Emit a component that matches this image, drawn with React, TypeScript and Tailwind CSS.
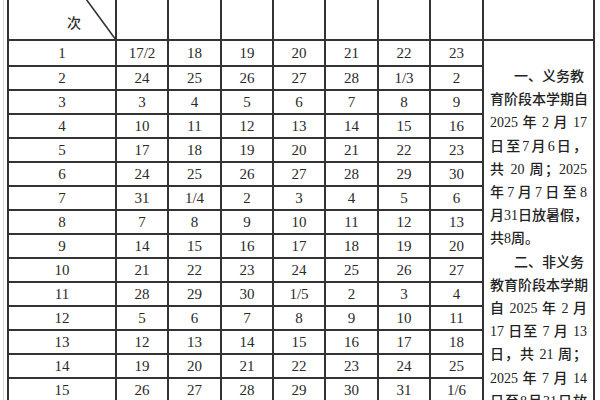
import React from "react";

const rows: string[][] = [
  ["17/2", "18", "19", "20", "21", "22", "23"],
  ["24", "25", "26", "27", "28", "1/3", "2"],
  ["3", "4", "5", "6", "7", "8", "9"],
  ["10", "11", "12", "13", "14", "15", "16"],
  ["17", "18", "19", "20", "21", "22", "23"],
  ["24", "25", "26", "27", "28", "29", "30"],
  ["31", "1/4", "2", "3", "4", "5", "6"],
  ["7", "8", "9", "10", "11", "12", "13"],
  ["14", "15", "16", "17", "18", "19", "20"],
  ["21", "22", "23", "24", "25", "26", "27"],
  ["28", "29", "30", "1/5", "2", "3", "4"],
  ["5", "6", "7", "8", "9", "10", "11"],
  ["12", "13", "14", "15", "16", "17", "18"],
  ["19", "20", "21", "22", "23", "24", "25"],
  ["26", "27", "28", "29", "30", "31", "1/6"],
  ["2", "3", "4", "5", "6", "7", "8"],
  ["9", "10", "11", "12", "13", "14", "15"],
];

const noteLines: { t: string; just: boolean; indent?: boolean }[] = [
  { t: "一、义务教", just: false, indent: true },
  { t: "育阶段本学期自", just: true },
  { t: "2025 年 2 月 17", just: true },
  { t: "日至7月6日，", just: true },
  { t: "共 20 周；2025", just: true },
  { t: "年7月7日至8", just: true },
  { t: "月31日放暑假，", just: true },
  { t: "共8周。", just: false },
  { t: "二、非义务", just: false, indent: true },
  { t: "教育阶段本学期", just: true },
  { t: "自 2025 年 2 月", just: true },
  { t: "17 日至 7 月 13", just: true },
  { t: "日，共 21 周；", just: true },
  { t: "2025 年 7 月 14", just: true },
  { t: "日至8月31日放", just: true },
  { t: "暑假，共7周。", just: false },
];

export default function App() {
  return (
    <div className="w-[600px] h-[400px] overflow-hidden bg-white flex">
      <div className="w-[3px] shrink-0" />
      <div className="w-[4px] shrink-0 border-l border-[#d6d6d6]" />
      <div
        className="grid bg-[#333] pl-[2px] pr-[2px] gap-[2px] grid-cols-[106px_50px_51px_50px_50px_51px_50px_51px_109px] grid-rows-[39px_24px_repeat(20,22px)] self-start"
        style={{ fontFamily: '"Liberation Serif", "Noto Sans CJK SC", serif' }}
      >
        {/* header */}
        <div className="relative bg-white col-start-1 row-start-1">
          <svg className="absolute inset-0" width="106" height="39" viewBox="0 0 106 39">
            <line x1="77" y1="-1" x2="107" y2="40" stroke="#333" strokeWidth="1.6" />
          </svg>
          <div
            className="pl-[58px] pt-[14px] text-[14px] leading-[16px] text-[#333] font-medium"
            style={{ fontFamily: '"Noto Sans CJK SC", sans-serif' }}
          >
            次
          </div>
        </div>
        {[2, 3, 4, 5, 6, 7, 8, 9].map((c) => (
          <div key={c} className="bg-white row-start-1" />
        ))}

        {/* note column */}
        <div
          className="bg-white col-start-9 row-start-2 row-span-21 px-[6px] pt-[24px] text-[14px] leading-[23.2px] text-[#222] font-medium"
          style={{ fontFamily: '"Liberation Serif", "Noto Sans CJK SC", serif' }}
        >
          {noteLines.map((l, i) => (
            <div
              key={i}
              className={`${l.just ? "text-justify [text-align-last:justify]" : "text-left"} ${l.indent ? "pl-[24px]" : ""} whitespace-nowrap`}
            >
              {l.t}
            </div>
          ))}
        </div>

        {rows.map((r, i) => (
          <React.Fragment key={i}>
            <div className="bg-white col-start-1 flex items-center justify-center text-[15px] text-[#2a2a2a]">
              {i + 1}
            </div>
            {r.map((v, j) => (
              <div
                key={j}
                className="bg-white flex items-center justify-center text-[15px] text-[#2a2a2a]"
              >
                {v}
              </div>
            ))}
          </React.Fragment>
        ))}
      </div>
    </div>
  );
}
